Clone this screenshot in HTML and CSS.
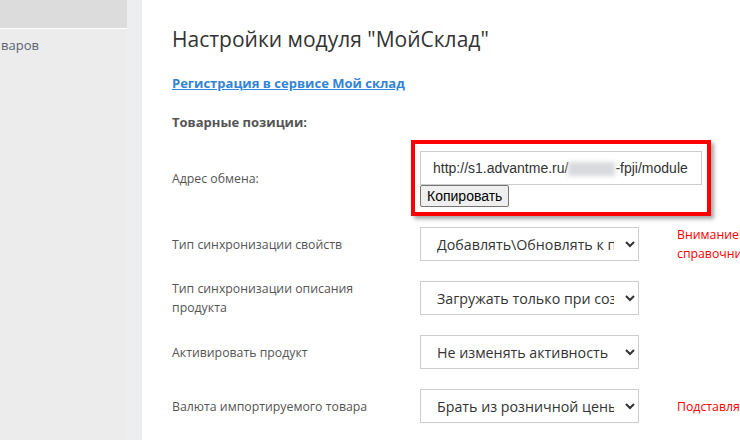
FILE: index.html
```html
<!DOCTYPE html>
<html lang="ru">
<head>
    <meta charset="UTF-8">
    <meta name="viewport" content="width=device-width, initial-scale=1.0">
    <title>МойСклад</title>
    <link rel="stylesheet" href="styles.css">
</head>
<body>
    <div class="page">
        <aside class="sidebar">
            <div class="sidebar-head"></div>
            <div class="sidebar-item">варов</div>
        </aside>
        <div class="gutter"></div>
        <main class="content">
            <h1>Настройки модуля "МойСклад"</h1>
            <a class="reg-link" href="#">Регистрация в сервисе Мой склад</a>
            <div class="section-title">Товарные позиции:</div>

            <div class="row row-address">
                <div class="label">Адрес обмена:</div>
                <div class="exchange-box">
                    <div class="fake-input"><span class="input-text">http://s1.advantme.ru/<span class="blur"></span>-fpji/modules/moysklad/exchange.php</span></div>
                    <button class="copy-btn">Копировать</button>
                </div>
            </div>

            <div class="row row-first">
                <div class="label">Тип синхронизации свойств</div>
                <select class="field"><option>Добавлять\Обновлять к продукту</option></select>
                <div class="note">Внимание! Значения свойств добавляются в<br>справочники магазина</div>
            </div>

            <div class="row">
                <div class="label">Тип синхронизации описания продукта</div>
                <select class="field"><option>Загружать только при создании</option></select>
            </div>

            <div class="row">
                <div class="label">Активировать продукт</div>
                <select class="field"><option>Не изменять активность</option></select>
            </div>

            <div class="row">
                <div class="label">Валюта импортируемого товара</div>
                <select class="field"><option>Брать из розничной цены</option></select>
                <div class="note">Подставляется валюта розничной цены</div>
            </div>
        </main>
    </div>
</body>
</html>
```

FILE: styles.css
```css
body{
    margin: 0;
    font-family: "Open Sans", "Noto Sans", sans-serif;
    background-color: #fff;
}
.page{
    display: flex;
    width: 740px;
    height: 440px;
    overflow: hidden;
}
.sidebar{
    width: 127px;
    flex-shrink: 0;
    background-color: #ececec;
}
.sidebar-head{
    height: 28px;
    background-color: #dcdcdc;
    border-bottom: 1px solid #fff;
}
.sidebar-item{
    margin-top: 7px;
    padding-left: 1px;
    font-size: 13px;
    line-height: 18px;
    color: #5b6271;
}
.gutter{
    width: 15px;
    flex-shrink: 0;
    background-color: #edeef0;
}
.content{
    flex: 1;
    min-width: 0;
    padding-left: 30px;
    overflow: hidden;
}
h1{
    margin: 24px 0 0;
    font-size: 21px;
    line-height: 30px;
    font-weight: 400;
    color: #333;
    white-space: nowrap;
}
.reg-link{
    display: inline-block;
    margin-top: 20px;
    font-size: 13px;
    line-height: 18px;
    font-weight: 700;
    color: #3284d6;
}
.section-title{
    margin-top: 20px;
    font-size: 13px;
    line-height: 18px;
    font-weight: 700;
    color: #555;
}
.row{
    display: flex;
    align-items: center;
    height: 34px;
    margin-top: 20px;
}
.row-address{
    height: 76px;
    margin-top: 9px;
}
.row-first{
    margin-top: 11px;
}
.label{
    width: 220px;
    flex-shrink: 0;
    padding-right: 28px;
    font-size: 12.3px;
    line-height: 19px;
    color: #555;
}
.exchange-box{
    box-sizing: border-box;
    width: 300px;
    height: 76px;
    flex-shrink: 0;
    margin-left: -9px;
    padding: 7px 5px 5px;
    border: 4px solid #ff0000;
    box-shadow: 3px 3px 4px rgba(0,0,0,0.35);
}
.fake-input{
    height: 32px;
    line-height: 32px;
    padding: 0 13px 0 12px;
    border: 1px solid #ccc;
    font-family: "Liberation Sans", Arial, sans-serif;
    font-size: 14px;
    color: #333;
}
.input-text{
    display: block;
    white-space: nowrap;
    overflow: hidden;
}
.blur{
    display: inline-block;
    width: 47px;
    height: 14px;
    vertical-align: middle;
    background-color: #d9dadd;
    filter: blur(2px);
}
.copy-btn{
    display: block;
    height: 22px;
    margin: 0;
    padding: 1px 6px;
    font-family: "Liberation Sans", Arial, sans-serif;
    font-size: 14px;
    color: #000;
    background-color: #efefef;
    border: 1px solid #767676;
    border-radius: 2px;
}
.field{
    box-sizing: border-box;
    width: 219px;
    height: 34px;
    flex-shrink: 0;
    padding: 0 8px 0 12px;
    font-family: "Open Sans", sans-serif;
    font-size: 14.25px;
    color: #333;
    background-color: #fff;
    border: 1px solid #ccc;
    border-radius: 0;
}
.note{
    padding-left: 38px;
    font-size: 12.3px;
    line-height: 19px;
    color: #ff0000;
    white-space: nowrap;
}
```
